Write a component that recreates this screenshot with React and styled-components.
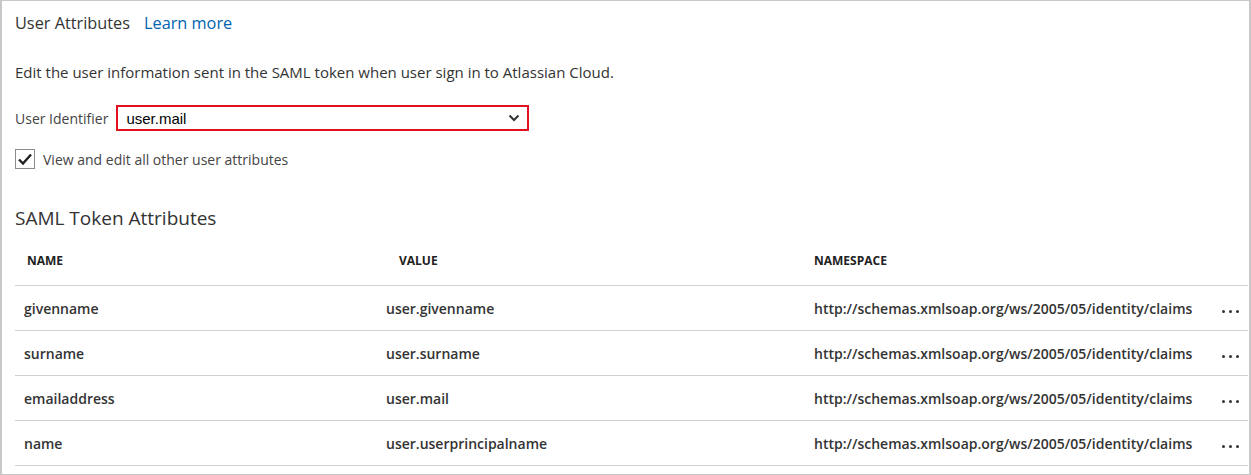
import React from 'react';
import styled, { createGlobalStyle } from 'styled-components';

const GlobalStyle = createGlobalStyle`
  html, body {
    margin: 0;
    padding: 0;
    background: #fff;
  }
  body {
    font-family: 'Open Sans', 'Noto Sans', sans-serif;
    color: #333;
  }
`;

const attributes = [
  { name: 'givenname', value: 'user.givenname' },
  { name: 'surname', value: 'user.surname' },
  { name: 'emailaddress', value: 'user.mail' },
  { name: 'name', value: 'user.userprincipalname' },
];

const NAMESPACE = 'http://schemas.xmlsoap.org/ws/2005/05/identity/claims';

function Chevron() {
  return (
    <svg width='12' height='8' viewBox='0 0 12 8'>
      <path d='M1.5 1.5 L6 6 L10.5 1.5' fill='none' stroke='#333' strokeWidth='2' />
    </svg>
  );
}

function Check() {
  return (
    <svg width='16' height='14' viewBox='0 0 16 14'>
      <path d='M2 7.5 L6 11.5 L14 2.5' fill='none' stroke='#222' strokeWidth='2.4' />
    </svg>
  );
}

function UserAttributes() {
  return (
    <Panel>
      <TitleRow>
        <Title>User Attributes</Title>
        <Link href='#'>Learn more</Link>
      </TitleRow>
      <Description>
        Edit the user information sent in the SAML token when user sign in to
        Atlassian Cloud.
      </Description>
      <FieldRow>
        <Label>User Identifier</Label>
        <Select>
          <span>user.mail</span>
          <Chevron />
        </Select>
      </FieldRow>
      <CheckRow>
        <CheckBox>
          <Check />
        </CheckBox>
        <span>View and edit all other user attributes</span>
      </CheckRow>
      <SectionTitle>SAML Token Attributes</SectionTitle>
      <Table>
        <HeadRow>
          <HeadCell $pad={12}>NAME</HeadCell>
          <HeadCell $pad={13}>VALUE</HeadCell>
          <HeadCell>NAMESPACE</HeadCell>
          <span />
        </HeadRow>
        {attributes.map((a) => (
          <Row key={a.name}>
            <Cell $pad={9}>{a.name}</Cell>
            <Cell>{a.value}</Cell>
            <Cell>{NAMESPACE}</Cell>
            <More>
              <i />
              <i />
              <i />
            </More>
          </Row>
        ))}
      </Table>
    </Panel>
  );
}

export default function App() {
  return (
    <>
      <GlobalStyle />
      <UserAttributes />
    </>
  );
}

const Panel = styled.div`
  width: 1251px;
  height: 475px;
  box-sizing: border-box;
  border-top: 1px solid #c8c8c8;
  border-left: 2px solid #c8c8c8;
  border-right: 2px solid #c8c8c8;
  border-bottom: 1px solid #c8c8c8;
  padding: 0 1px 0 13px;
  overflow: hidden;
  font-size: 14px;
`;

const TitleRow = styled.div`
  display: flex;
  align-items: baseline;
  gap: 14px;
  height: 45px;
  padding-top: 11px;
  box-sizing: border-box;
`;

const Title = styled.span`
  font-size: 16.3px;
  color: #333;
`;

const Link = styled.a`
  font-size: 16.3px;
  color: #0063b1;
  text-decoration: none;
`;

const Description = styled.div`
  margin-top: 16px;
  font-size: 15px;
  line-height: 20px;
`;

const FieldRow = styled.div`
  display: flex;
  align-items: center;
  gap: 8px;
  margin-top: 23px;
`;

const Label = styled.span`
  color: #444;
`;

const Select = styled.div`
  width: 413px;
  height: 26px;
  box-sizing: border-box;
  border: 2px solid #e3101f;
  display: flex;
  align-items: center;
  justify-content: space-between;
  padding: 0 7px 0 8px;
  font-family: 'Liberation Sans', Arial, sans-serif;
  font-size: 15px;
  color: #000;
`;

const CheckRow = styled.div`
  display: flex;
  align-items: center;
  gap: 8px;
  margin-top: 18px;
  color: #444;
`;

const CheckBox = styled.span`
  width: 20px;
  height: 20px;
  box-sizing: border-box;
  border: 1px solid #8a8a8a;
  display: flex;
  align-items: center;
  justify-content: center;
`;

const SectionTitle = styled.div`
  font-size: 19px;
  margin-top: 37px;
  line-height: 24px;
`;

const Table = styled.div`
  margin-top: 9px;
`;

const grid = `
  display: grid;
  grid-template-columns: 371px 428px 1fr 30px;
  align-items: center;
  border-bottom: 1px solid #d0d0d0;
`;

const HeadRow = styled.div`
  ${grid}
  height: 47px;
  padding-bottom: 3px;
  box-sizing: border-box;
`;

const HeadCell = styled.span`
  font-size: 12px;
  font-weight: 700;
  color: #222;
  padding-left: ${(p) => p.$pad || 0}px;
`;

const Row = styled.div`
  ${grid}
  height: 45px;
  box-sizing: border-box;
`;

const Cell = styled.span`
  font-weight: 600;
  color: #333;
  padding-left: ${(p) => p.$pad || 0}px;
  white-space: nowrap;
`;

const More = styled.span`
  display: flex;
  gap: 4px;
  padding: 6px 0 0 4px;
  i {
    width: 3px;
    height: 3px;
    border-radius: 50%;
    background: #333;
  }
`;
